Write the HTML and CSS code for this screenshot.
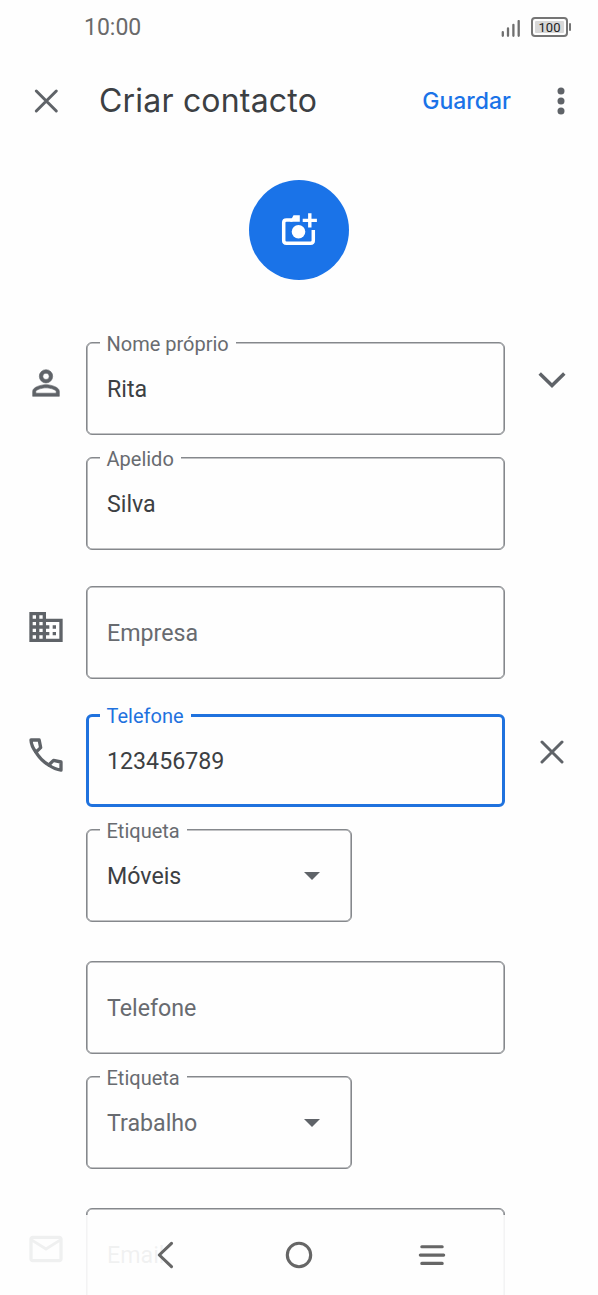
FILE: index.html
```html
<!DOCTYPE html>
<html lang="pt">
<head>
<meta charset="utf-8">
<title>Criar contacto</title>
<link rel="stylesheet" href="styles.css">
</head>
<body>
<div class="screen">
  <div class="status">
    <span class="time">10:00</span>
    <svg class="signal" width="20" height="18" viewBox="0 0 20 18"><path d="M1.8 12.2v3.600M7 8.400v7.400M12.400 4.800v11M17.700 1v14.800" stroke="#6f6f6f" stroke-width="2.300" stroke-linecap="round"/></svg>
    <span class="battery"><span class="level">100</span></span>
    <span class="battery-tip"></span>
  </div>
  <header class="appbar">
    <svg class="close" width="28" height="28" viewBox="0 0 28 28"><path d="M4.300 4l20 20M24.300 4L4.300 24" stroke="#5f6368" stroke-width="3" stroke-linecap="round"/></svg>
    <h1 class="title">Criar contacto</h1>
    <button class="save">Guardar</button>
    <svg class="more" width="8" height="28" viewBox="0 0 8 28" fill="#5f6368"><circle cx="4" cy="4" r="3.500"/><circle cx="4" cy="14" r="3.500"/><circle cx="4" cy="24" r="3.500"/></svg>
  </header>
  <div class="avatar">
    <svg width="40" height="40" viewBox="0 0 40 40"><path d="M13.500 10H7.500Q4.700 10 4.700 12.600V30.500Q4.700 33.200 7.500 33.200H31.500Q34.300 33.200 34.300 30.500V20" fill="none" stroke="#fff" stroke-width="3.500"/><path d="M11 11.700L14.500 5.300H20.800v6.400zM29.100 3.300h3.400v5.400h5.400v3.400h-5.400v5.400h-3.400v-5.400h-5.400V8.700h5.400z" fill="#fff"/><circle cx="19.500" cy="21.800" r="6.800" fill="#fff"/></svg>
  </div>

  <section class="group name">
    <svg class="icon" viewBox="0 0 24 24"><path d="M12 4a4 4 0 1 0 0 8 4 4 0 0 0 0-8zm0 2.100a1.900 1.900 0 1 1 0 3.800 1.900 1.900 0 0 1 0-3.800zM12 13c-2.670 0-8 1.340-8 4v3h16v-3c0-2.660-5.330-4-8-4zm6.100 5.100H5.900V17c0-.64 3.130-2.100 6.100-2.100s6.100 1.460 6.100 2.100z" stroke="#5f6368" stroke-width=".35"/></svg>
    <div class="fields">
      <div class="field"><span class="label">Nome próprio</span><span class="value">Rita</span></div>
      <div class="field"><span class="label">Apelido</span><span class="value">Silva</span></div>
    </div>
    <svg class="action" width="28" height="28" viewBox="0 0 28 28"><path d="M1.700 7.500L14 19.500L26.300 7.500" fill="none" stroke="#5f6368" stroke-width="3.500"/></svg>
  </section>

  <section class="group company">
    <svg class="icon" viewBox="0 0 24 24"><path d="M12 7V3H2v18h20V7H12zM6 19H4v-2h2v2zm0-4H4v-2h2v2zm0-4H4V9h2v2zm0-4H4V5h2v2zm4 12H8v-2h2v2zm0-4H8v-2h2v2zm0-4H8V9h2v2zm0-4H8V5h2v2zm10 12h-8v-2h2v-2h-2v-2h2v-2h-2V9h8v10zm-2-8h-2v2h2v-2zm0 4h-2v2h2v-2z"/></svg>
    <div class="fields">
      <div class="field"><span class="value hint">Empresa</span></div>
    </div>
  </section>

  <section class="group phone">
    <svg class="icon" viewBox="0 0 24 24"><path d="M3 3H7.900L8.800 7.600L6 10.300C4.200 8 3.100 5.500 3 3zM21 21V16.200L16.500 15.200L13.700 18C16 19.700 18.500 20.800 21 21z" fill="none" stroke="#5f6368" stroke-width="2" stroke-linejoin="round"/><path d="M5.500 9.500C7.600 13.500 10.500 16.400 14.500 18.500" fill="none" stroke="#5f6368" stroke-width="2"/></svg>
    <div class="fields">
      <div class="field focused"><span class="label">Telefone</span><span class="value">123456789</span></div>
      <div class="field select"><span class="label">Etiqueta</span><span class="value">Móveis</span><span class="arrow"></span></div>
    </div>
    <svg class="action" width="28" height="28" viewBox="0 0 28 28"><path d="M4 4l20 20M24 4L4 24" stroke="#5f6368" stroke-width="3" stroke-linecap="round"/></svg>
  </section>

  <section class="group work">
    <div class="fields">
      <div class="field"><span class="value hint">Telefone</span></div>
      <div class="field select"><span class="label">Etiqueta</span><span class="value hint">Trabalho</span><span class="arrow"></span></div>
    </div>
  </section>

  <section class="group email">
    <svg class="icon" viewBox="0 0 24 24"><path d="M20 4H4c-1.100 0-2 .9-2 2v12c0 1.100.9 2 2 2h16c1.100 0 2-.9 2-2V6c0-1.100-.9-2-2-2zm0 14H4V8l8 5 8-5v10zm-8-7L4 6h16l-8 5z"/></svg>
    <div class="fields">
      <div class="field"><span class="value hint">Email</span></div>
    </div>
  </section>

  <nav class="navbar">
    <svg width="28" height="28" viewBox="0 0 28 28"><path d="M19.500 2.300L7.300 14L19.500 25.700"/></svg>
    <svg width="28" height="28" viewBox="0 0 28 28"><circle cx="14" cy="14" r="11.700"/></svg>
    <svg width="28" height="28" viewBox="0 0 28 28"><path d="M3.800 5.700h20.400M2.300 14.100h23.400M3.800 22.400h20.400"/></svg>
  </nav>
</div>
</body>
</html>
```
FILE: styles.css
```css
* { box-sizing: border-box; }
body { margin: 0; background: #fefefe; font-family: Roboto, sans-serif; }
svg { display: block; flex: none; }

.screen { position: relative; width: 598px; height: 1295px; overflow: hidden; background: #fefefe; }

.status { display: flex; align-items: center; height: 56px; padding: 0 27px 0 84px; }
.time { flex: 1; font-size: 23px; line-height: 28px; color: #6a6a6a; }
.signal { margin: 2px 10px 0 0; }
.battery { width: 37px; height: 20px; margin-bottom: 2px; padding: 2px; border: 2px solid #757575; border-radius: 4px; }
.level { display: block; height: 12px; border-radius: 1px; background: #d8d8d8; color: #222; font-size: 13px; line-height: 13px; text-align: center; }
.battery-tip { width: 2px; height: 8px; margin: 0 0 2px 1px; border-radius: 1px; background: #757575; }

.appbar { display: flex; align-items: center; height: 90px; padding: 0 33px 0 32px; }
.title { flex: 1; margin: 0 0 0 39px; font: 400 32px/40px Inter, sans-serif; letter-spacing: 0.200px; white-space: nowrap; color: #3c4043; }
.save { margin: 0; padding: 0; border: 0; background: none; font: 500 23px/30px Inter, sans-serif; color: #1a73e8; }
.more { margin-left: 46px; }

.avatar { display: flex; align-items: center; justify-content: center; width: 100px; height: 100px; margin: 34px auto 62px; border-radius: 50%; background: #1a73e8; }

.group { display: grid; grid-template-columns: 86px 419px 1fr; }
.company { margin-top: 36px; }
.phone { margin-top: 35px; }
.work { margin-top: 39px; }
.email { margin-top: 39px; }
.icon { width: 40px; height: 40px; margin: 21px 0 0 26px; fill: #5f6368; }
.action { margin: 24px 0 0 32.500px; }
.fields { grid-column: 2; display: flex; flex-direction: column; gap: 22px; }

.field { position: relative; display: flex; align-items: center; justify-content: space-between; height: 93px; padding: 1px 31px 0 20px; border: 1px solid #85888c; border-radius: 6px; box-shadow: inset 0 0 0 0.600px #85888c; }
.select { width: 266px; }
.focused { padding: 1px 28px 0 18px; border: 3px solid #1f72de; box-shadow: none; }
.value { font-size: 23.200px; line-height: 28px; color: #3c4043; }
.hint { color: #686b70; }
.label { position: absolute; left: 12.500px; top: -11px; padding: 0 7px; background: #fefefe; font-size: 20px; line-height: 25px; color: #686b70; }
.focused .label { left: 10.500px; top: -13px; color: #1f72de; }
.arrow { border: 8.500px solid transparent; border-top-color: #5f6368; border-bottom: 0; }

.navbar { position: absolute; left: 0; right: 0; bottom: 0; display: flex; justify-content: center; gap: 105px; height: 80px; padding-top: 26px; background: rgba(254, 254, 254, 0.910); }
.navbar svg { fill: none; stroke: #666; stroke-width: 3.100; stroke-linecap: round; stroke-linejoin: round; }
```
